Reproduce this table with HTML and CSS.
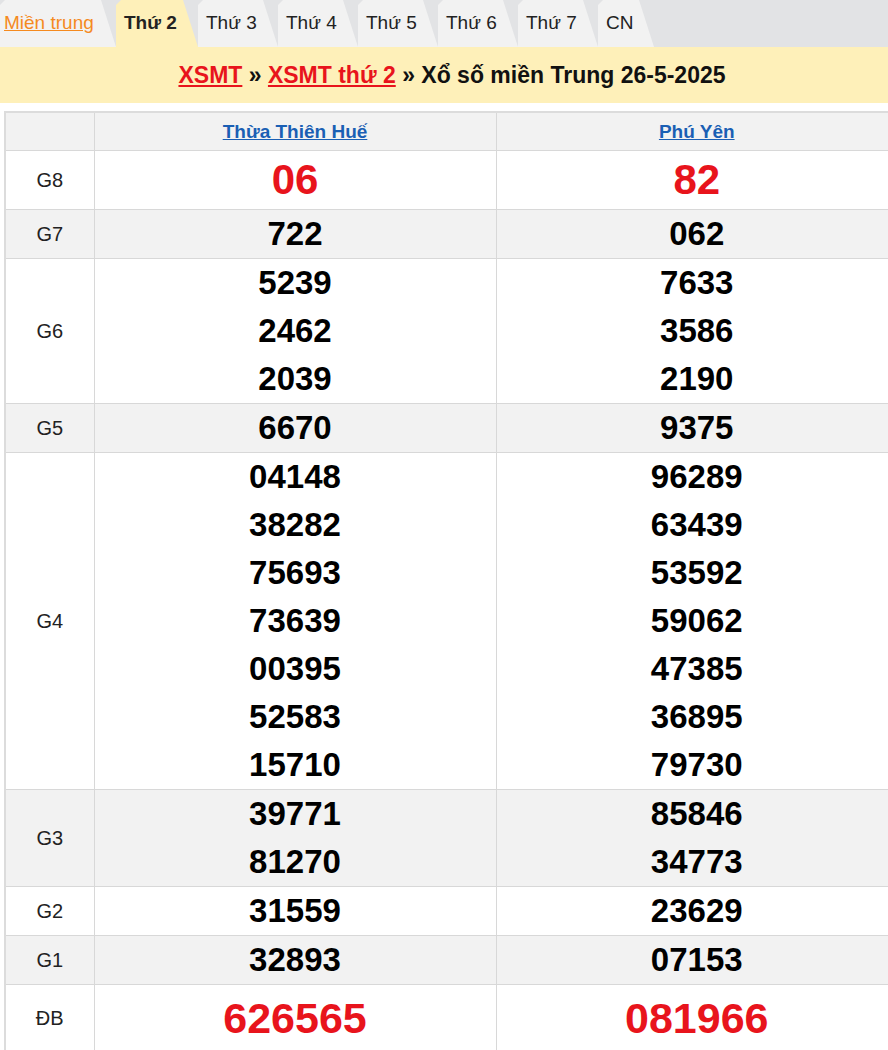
FILE: index.html
```html
<!DOCTYPE html>
<html lang="vi">
<head>
<meta charset="utf-8">
<title>XSMT thứ 2</title>
<link rel="stylesheet" href="styles.css">
</head>
<body>
<div class="tabs">
  <a class="tab tab-region" href="#"><span class="region-link">Miền trung</span></a>
  <a class="tab tab-day active" href="#">Thứ 2</a>
  <a class="tab tab-day" href="#">Thứ 3</a>
  <a class="tab tab-day" href="#">Thứ 4</a>
  <a class="tab tab-day" href="#">Thứ 5</a>
  <a class="tab tab-day" href="#">Thứ 6</a>
  <a class="tab tab-day" href="#">Thứ 7</a>
  <a class="tab tab-cn" href="#">CN</a>
</div>
<h2 class="title"><a class="red-link" href="#">XSMT</a> » <a class="red-link" href="#">XSMT thứ 2</a> » Xổ số miền Trung 26-5-2025</h2>
<table class="results">
  <colgroup><col class="c-label"><col class="c-prov"><col class="c-prov"></colgroup>
  <tr class="head">
    <th></th>
    <th><a class="prov" href="#">Thừa Thiên Huế</a></th>
    <th><a class="prov" href="#">Phú Yên</a></th>
  </tr>
  <tr class="g8">
    <td class="lbl">G8</td>
    <td><div class="num big">06</div></td>
    <td><div class="num big">82</div></td>
  </tr>
  <tr class="alt">
    <td class="lbl">G7</td>
    <td><div class="num">722</div></td>
    <td><div class="num">062</div></td>
  </tr>
  <tr>
    <td class="lbl">G6</td>
    <td><div class="num">5239</div><div class="num">2462</div><div class="num">2039</div></td>
    <td><div class="num">7633</div><div class="num">3586</div><div class="num">2190</div></td>
  </tr>
  <tr class="alt">
    <td class="lbl">G5</td>
    <td><div class="num">6670</div></td>
    <td><div class="num">9375</div></td>
  </tr>
  <tr>
    <td class="lbl">G4</td>
    <td><div class="num">04148</div><div class="num">38282</div><div class="num">75693</div><div class="num">73639</div><div class="num">00395</div><div class="num">52583</div><div class="num">15710</div></td>
    <td><div class="num">96289</div><div class="num">63439</div><div class="num">53592</div><div class="num">59062</div><div class="num">47385</div><div class="num">36895</div><div class="num">79730</div></td>
  </tr>
  <tr class="alt">
    <td class="lbl">G3</td>
    <td><div class="num">39771</div><div class="num">81270</div></td>
    <td><div class="num">85846</div><div class="num">34773</div></td>
  </tr>
  <tr>
    <td class="lbl">G2</td>
    <td><div class="num">31559</div></td>
    <td><div class="num">23629</div></td>
  </tr>
  <tr class="alt">
    <td class="lbl">G1</td>
    <td><div class="num">32893</div></td>
    <td><div class="num">07153</div></td>
  </tr>
  <tr class="db">
    <td class="lbl">ĐB</td>
    <td><div class="num special">626565</div></td>
    <td><div class="num special">081966</div></td>
  </tr>
</table>
</body>
</html>
```
FILE: styles.css
```css
html, body {
  margin: 0;
  padding: 0;
  background: #fff;
  overflow: hidden;
  font-family: "Liberation Sans", Arial, sans-serif;
  color: #222;
}

.tabs {
  display: flex;
  height: 47px;
  background: #e2e3e5;
}

.tab {
  display: flex;
  align-items: center;
  height: 47px;
  padding-left: 8px;
  padding-bottom: 1px;
  box-sizing: border-box;
  background: #f2f2f2;
  color: #222;
  font-size: 19px;
  text-decoration: none;
  clip-path: polygon(0 5px, 5px 0, calc(100% - 15px) 0, 100% 100%, 0 100%);
}

.tab-region { width: 116px; padding-left: 4px; }
.tab-day { width: 80px; }
.tab-day.active { width: 82px; }
.tab-cn { width: 56px; }

.tab.active {
  background: #fef0b9;
  font-weight: bold;
}

.region-link {
  color: #f58a1f;
  text-decoration: underline;
}

.title {
  margin: 0;
  height: 56px;
  line-height: 56px;
  background: #fef0b9;
  color: #111;
  font-size: 23px;
  font-weight: bold;
  text-align: center;
  padding-left: 16px;
}

.red-link {
  color: #e8141c;
  text-decoration: underline;
}

.results {
  margin: 8px 0 0 4px;
  width: 894px;
  table-layout: fixed;
  border-collapse: collapse;
  border: 2px solid #dcdcdc;
}

.c-label { width: 89px; }
.c-prov { width: 402px; }

.results th,
.results td {
  border: 1px solid #d8d8d8;
  padding: 0;
  text-align: center;
  vertical-align: middle;
}

.head th {
  height: 37px;
  background: #f2f2f2;
}

.prov {
  color: #1a5fb4;
  font-size: 19px;
  font-weight: bold;
  text-decoration: underline;
}

.alt td { background: #f2f2f2; }

.lbl {
  font-size: 20px;
  color: #222;
}

.num {
  font-size: 33px;
  font-weight: bold;
  line-height: 48px;
  color: #000;
}

.num.big {
  font-size: 42px;
  line-height: 58px;
  color: #e8141c;
}

.num.special {
  font-size: 43px;
  line-height: 66px;
  color: #e8141c;
}
```
